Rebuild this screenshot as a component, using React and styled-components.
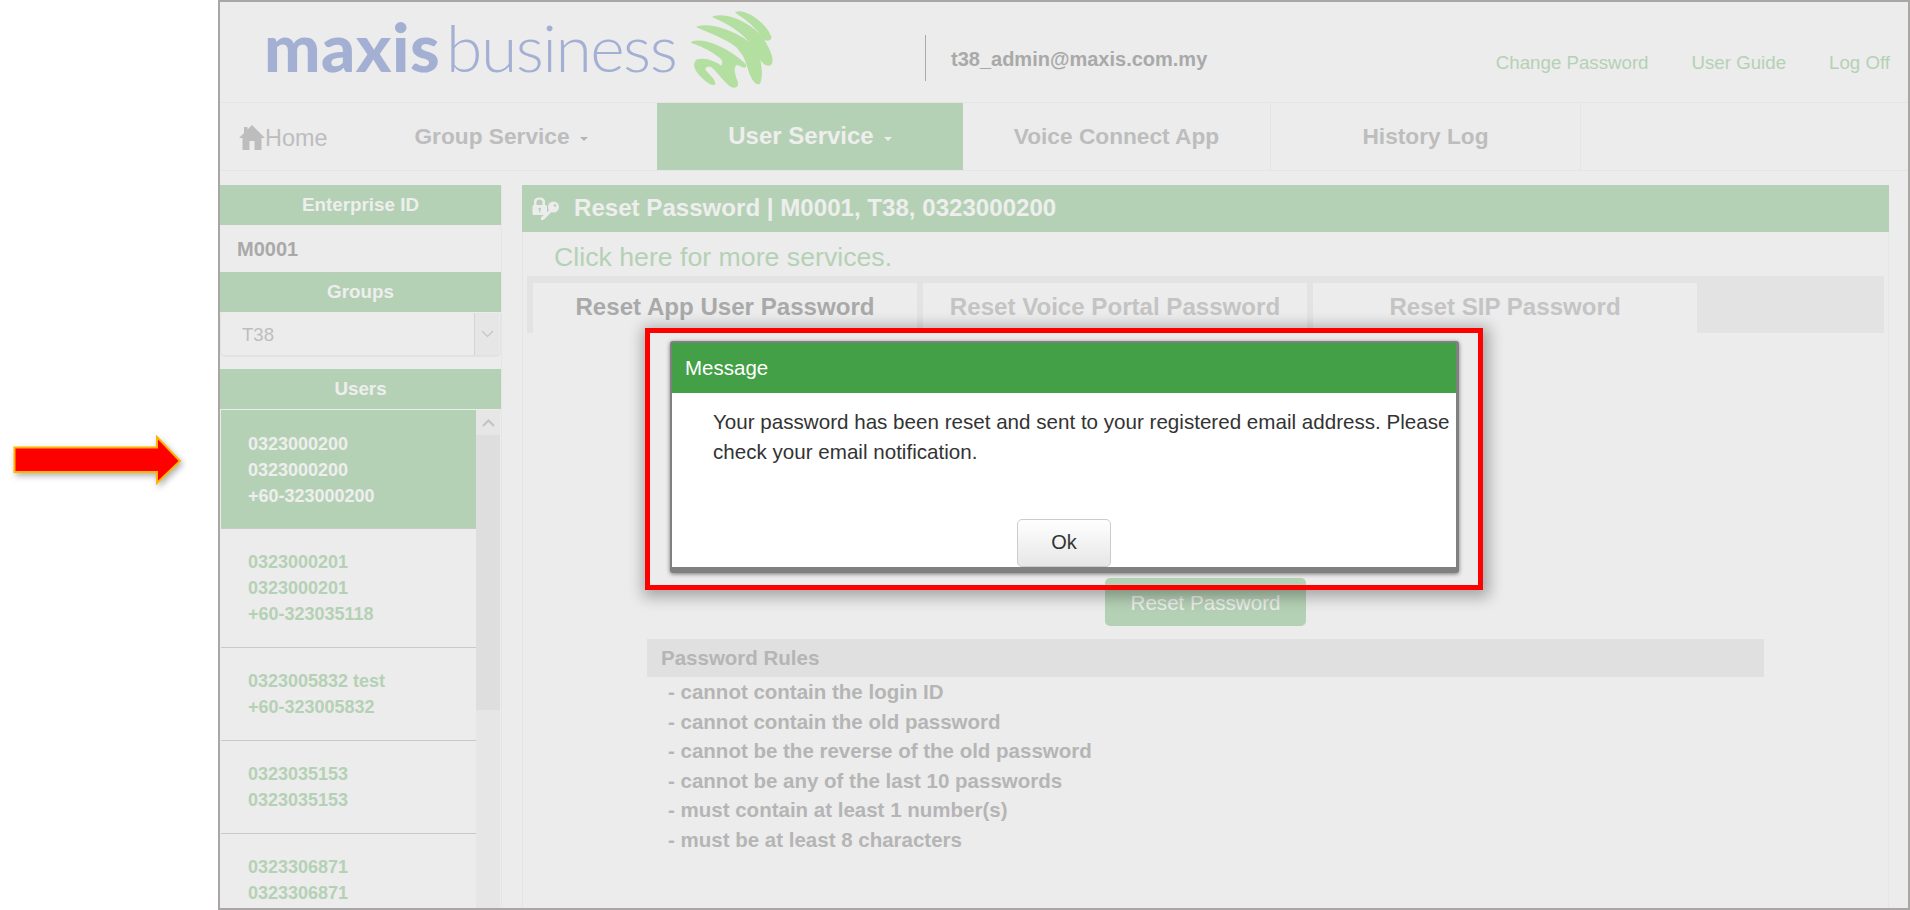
import styled, { createGlobalStyle } from "styled-components";

const GREEN = "#b5d1b5";
const PAPER = "#ececec";
const MUTED = "#b5b5b5";

const users = [
  { lines: ["0323000200", "0323000200", "+60-323000200"], active: true },
  { lines: ["0323000201", "0323000201", "+60-323035118"] },
  { lines: ["0323005832 test", "+60-323005832"] },
  { lines: ["0323035153", "0323035153"] },
  { lines: ["0323306871", "0323306871"] },
];

const rules = [
  "cannot contain the login ID",
  "cannot contain the old password",
  "cannot be the reverse of the old password",
  "cannot be any of the last 10 passwords",
  "must contain at least 1 number(s)",
  "must be at least 8 characters",
];

const tabs = ["Reset App User Password", "Reset Voice Portal Password", "Reset SIP Password"];

function Arrow() {
  return (
    <ArrowSvg width="170" height="52" viewBox="0 0 170 52">
      <path
        d="M1.5 12.5H144V2L167 26L144 48V37H1.5Z"
        fill="#ff0000"
        stroke="#ffb400"
        strokeWidth="2"
      />
    </ArrowSvg>
  );
}

function Swirl() {
  return (
    <SwirlSvg width="100" height="90" viewBox="0 0 300 270">
      <g fill="#b3dfa0" stroke="#b3dfa0" strokeWidth="4" strokeLinejoin="round">
        <path d="M168 22C200 14 255 55 272 95C274 106 262 108 250 100C235 75 205 45 168 22Z" />
        <path d="M100 36C150 22 235 65 262 125C275 150 282 175 268 180C245 180 235 150 222 128C195 85 145 55 100 36Z" />
        <path d="M52 66C100 52 190 90 225 130C245 165 248 215 238 235C225 240 212 215 205 190C195 155 190 150 170 125C140 100 95 85 52 66Z" />
        <path d="M35 112C75 98 150 135 195 178C200 195 185 180 170 178C155 185 165 215 172 232C175 248 160 250 148 240C125 220 110 195 95 185C80 178 68 190 78 200C90 212 105 225 104 236C95 245 75 225 60 210C45 195 38 175 52 165C75 158 105 170 125 185C135 165 125 160 110 150C85 130 60 122 35 112Z" />
      </g>
    </SwirlSvg>
  );
}

function HomeIcon() {
  return (
    <HomeSvg width="26" height="25" viewBox="0 0 26 25">
      <path fill="#bdbdbd" d="M13 0L26 13H22.500V25H15.500V16H10.500V25H3.500V13H0L5 8V2H8.500V4.500Z" />
    </HomeSvg>
  );
}

function LockKeyIcon() {
  return (
    <svg width="28" height="26" viewBox="0 0 28 26">
      <g fill="#ececec">
        <path d="M2 10.500V6.500C2 1 13 1 13 6.500V10.500H10.500V7C10.500 3.500 4.500 3.500 4.500 7V10.500Z" />
        <rect x="0.500" y="10" width="14.500" height="10" rx="1.500" />
        <circle cx="21.500" cy="12" r="5.500" />
        <path d="M18 14.500L20 16.500L12.500 24L11 25H9V22.500Z" />
      </g>
      <circle cx="7.700" cy="14" r="1.300" fill={GREEN} />
      <rect x="7.200" y="14" width="1" height="3.500" fill={GREEN} />
      <circle cx="23" cy="10.500" r="1.300" fill={GREEN} />
    </svg>
  );
}

function Chevron({ up }) {
  return (
    <svg width="13" height="8" viewBox="0 0 13 8">
      <path
        d={up ? "M1 7L6.500 1.500L12 7" : "M1 1L6.500 6.500L12 1"}
        fill="none"
        stroke="#c4c4c4"
        strokeWidth={up ? 2.2 : 1.2}
      />
    </svg>
  );
}

export default function App() {
  return (
    <Page>
      <GlobalStyle />
      <Gutter>
        <Arrow />
      </Gutter>
      <Frame>
        <Header>
          <Logo>
            <LogoBold>maxis</LogoBold>
            <LogoLight>business</LogoLight>
            <Swirl />
          </Logo>
          <Account>t38_admin@maxis.com.my</Account>
          <Links>
            <span>Change Password</span>
            <span>User Guide</span>
            <span>Log Off</span>
          </Links>
        </Header>

        <Nav>
          <HomeLink>
            <HomeIcon />
            <span>Home</span>
          </HomeLink>
          <NavItem $w={312}>
            Group Service<Caret />
          </NavItem>
          <NavItem $w={306} $active>
            User Service<Caret $active />
          </NavItem>
          <NavItem $w={308} $line>Voice Connect App</NavItem>
          <NavItem $w={310} $line>History Log</NavItem>
          <NavRest />
        </Nav>

        <Body>
          <Sidebar>
            <SideTitle>Enterprise ID</SideTitle>
            <EnterpriseId>M0001</EnterpriseId>
            <SideTitle>Groups</SideTitle>
            <GroupSelect>
              <GroupValue>T38</GroupValue>
              <GroupButton>
                <Chevron />
              </GroupButton>
            </GroupSelect>
            <UsersTitle>Users</UsersTitle>
            <UserPane>
              <UserList>
                {users.map((user) => (
                  <UserRow key={user.lines[0]} $active={user.active}>
                    {user.lines.map((line, i) => (
                      <div key={i}>{line}</div>
                    ))}
                  </UserRow>
                ))}
              </UserList>
              <Scrollbar>
                <ScrollUp>
                  <Chevron up />
                </ScrollUp>
                <ScrollThumb />
              </Scrollbar>
            </UserPane>
          </Sidebar>

          <Main>
            <MainTitle>
              <LockKeyIcon />
              <span>Reset Password | M0001, T38, 0323000200</span>
            </MainTitle>
            <Panel>
              <MoreLink>Click here for more services.</MoreLink>
              <TabStrip>
                {tabs.map((tab, i) => (
                  <Tab key={tab} $active={i === 0}>
                    {tab}
                  </Tab>
                ))}
              </TabStrip>
              <ResetButton>Reset Password</ResetButton>
              <RulesTitle>Password Rules</RulesTitle>
              <RuleList>
                {rules.map((rule) => (
                  <li key={rule}>- {rule}</li>
                ))}
              </RuleList>
            </Panel>
          </Main>
        </Body>

        <Highlight>
          <Modal>
            <ModalHead>Message</ModalHead>
            <ModalBody>
              <ModalText>
                Your password has been reset and sent to your registered email address. Please
                check your email notification.
              </ModalText>
              <OkButton>Ok</OkButton>
            </ModalBody>
          </Modal>
        </Highlight>
      </Frame>
    </Page>
  );
}

const GlobalStyle = createGlobalStyle`
  * {
    box-sizing: border-box;
  }
  html, body {
    margin: 0;
    background: #fff;
    font-family: "Liberation Sans", Arial, sans-serif;
  }
`;

const Page = styled.div`
  display: flex;
  width: 1910px;
  height: 910px;
  overflow: hidden;
`;
const Gutter = styled.div`
  width: 218px;
  flex: none;
  padding: 435px 0 0 13px;
`;
const ArrowSvg = styled.svg`
  display: block;
  filter: drop-shadow(2px 3px 3px rgba(0, 0, 0, 0.3));
`;
const Frame = styled.div`
  position: relative;
  flex: 1;
  display: flex;
  flex-direction: column;
  border: 2px solid #aaa6a6;
  background: ${PAPER};
  overflow: hidden;
`;

const Header = styled.div`
  position: relative;
  display: flex;
  height: 101px;
  flex: none;
  border-bottom: 1px solid #e5e5e5;
`;
const Logo = styled.div`
  display: flex;
  align-items: baseline;
  width: 705px;
  padding: 3px 0 0 44px;
  color: #a4b0d3;
  font-family: Lato, sans-serif;
  font-size: 67px;
  line-height: 82px;
`;
const LogoBold = styled.span`
  font-weight: 900;
  letter-spacing: 0.5px;
`;
const LogoLight = styled.span`
  font-weight: 300;
  font-size: 66px;
  margin-left: 6px;
  letter-spacing: -1.5px;
`;
const SwirlSvg = styled.svg`
  align-self: flex-start;
  margin: 0 0 0 4px;
`;
const Account = styled.div`
  align-self: flex-start;
  height: 46px;
  margin-top: 33px;
  padding-left: 25px;
  border-left: 1px solid #aaa;
  font-size: 20px;
  font-weight: 700;
  line-height: 48px;
  color: #a9a9a9;
`;
const Links = styled.div`
  display: flex;
  gap: 43px;
  margin-left: auto;
  padding: 50px 18px 0 0;
  font-size: 18.700px;
  line-height: 22px;
  color: ${GREEN};
`;

const Nav = styled.div`
  display: flex;
  height: 68px;
  flex: none;
  border-bottom: 1px solid #e5e5e5;
`;
const HomeLink = styled.div`
  display: flex;
  align-items: center;
  width: 125px;
  padding: 4px 0 0 19px;
  font-size: 23.400px;
  color: #bdbdbd;
`;
const HomeSvg = styled.svg`
  margin-bottom: 3px;
`;
const NavItem = styled.div`
  display: flex;
  align-items: center;
  justify-content: center;
  width: ${(p) => p.$w}px;
  padding-bottom: 1px;
  font-size: ${(p) => (p.$active ? 24 : 22.700)}px;
  font-weight: 700;
  color: ${(p) => (p.$active ? "#eee" : "#bdbdbd")};
  background: ${(p) => (p.$active ? GREEN : "transparent")};
  border-right: ${(p) => (p.$line ? "1px solid #e5e5e5" : "0")};
`;
const NavRest = styled.div`
  flex: 1;
`;
const Caret = styled.i`
  width: 0;
  height: 0;
  margin: 5px 0 0 10px;
  border-top: 4px solid ${(p) => (p.$active ? "#eee" : "#b5b5b5")};
  border-left: 4px solid transparent;
  border-right: 4px solid transparent;
`;

const Body = styled.div`
  display: flex;
  flex: 1;
  min-height: 0;
  padding-top: 14px;
`;
const Sidebar = styled.div`
  display: flex;
  flex-direction: column;
  width: 282px;
  flex: none;
  border-right: 1px solid #e5e5e5;
`;
const SideTitle = styled.div`
  height: 40px;
  flex: none;
  background: ${GREEN};
  text-align: center;
  font-size: 18.800px;
  font-weight: 700;
  line-height: 39px;
  color: #eee;
`;
const EnterpriseId = styled.div`
  height: 47px;
  flex: none;
  padding-left: 17px;
  font-size: 20px;
  font-weight: 700;
  line-height: 48px;
  color: #a9a9a9;
`;
const GroupSelect = styled.div`
  display: flex;
  height: 45px;
  flex: none;
  margin-bottom: 12px;
  padding: 1px 1px 0;
  border: solid #e2e2e2;
  border-width: 0 1px 2px;
  border-radius: 5px;
`;
const GroupValue = styled.div`
  flex: 1;
  padding-left: 20px;
  font-size: 18.600px;
  line-height: 44px;
  color: #bdbdbd;
`;
const GroupButton = styled.div`
  display: flex;
  align-items: center;
  justify-content: center;
  width: 25px;
  background: #e6e6e6;
  border-left: 1px solid #d5d5d5;
`;
const UsersTitle = styled(SideTitle)`
  margin-bottom: 1px;
`;
const UserPane = styled.div`
  display: flex;
  flex: 1;
  min-height: 0;
  padding-left: 1px;
`;
const UserList = styled.div`
  width: 255px;
  flex: none;
`;
const UserRow = styled.div`
  padding: ${(p) => (p.$active ? "21px 0 19px" : "20px 0")};
  padding-left: 27px;
  border-bottom: 1px solid #c9c9c9;
  background: ${(p) => (p.$active ? GREEN : "transparent")};
  font-size: 18px;
  font-weight: 700;
  line-height: 26px;
  color: ${(p) => (p.$active ? "#eee" : GREEN)};
`;
const Scrollbar = styled.div`
  width: 24px;
  flex: none;
  background: #e6e6e6;
`;
const ScrollUp = styled.div`
  display: flex;
  align-items: center;
  justify-content: center;
  height: 25px;
`;
const ScrollThumb = styled.div`
  height: 275px;
  background: #dedede;
`;

const Main = styled.div`
  display: flex;
  flex-direction: column;
  width: 1367px;
  margin-left: 20px;
  flex: none;
`;
const MainTitle = styled.div`
  display: flex;
  align-items: center;
  gap: 14px;
  height: 47px;
  flex: none;
  padding: 0 0 1px 10px;
  background: ${GREEN};
  font-size: 24.100px;
  font-weight: 700;
  color: #eee;
`;
const Panel = styled.div`
  flex: 1;
  display: flex;
  flex-direction: column;
  padding: 0 4px;
  border-left: 1px solid #e5e5e5;
  border-right: 1px solid #e5e5e5;
`;
const MoreLink = styled.div`
  height: 44px;
  padding: 9px 0 0 27px;
  font-size: 26.700px;
  line-height: 32px;
  color: ${GREEN};
`;
const TabStrip = styled.div`
  display: flex;
  gap: 6px;
  height: 57px;
  flex: none;
  padding: 7px 0 0 6px;
  background: #e3e3e3;
`;
const Tab = styled.div`
  width: 384px;
  text-align: center;
  background: ${PAPER};
  font-size: 24.100px;
  font-weight: 700;
  line-height: 48px;
  color: ${(p) => (p.$active ? "#a9a9a9" : "#c4c4c4")};
`;
const ResetButton = styled.div`
  align-self: center;
  width: 201px;
  height: 48px;
  margin: 245px 0 13px;
  border-radius: 5px;
  background: ${GREEN};
  text-align: center;
  font-size: 20.600px;
  line-height: 49px;
  color: #eee;
`;
const RulesTitle = styled.div`
  height: 38px;
  flex: none;
  margin: 0 120px;
  padding-left: 14px;
  background: #e0e0e0;
  font-size: 20.500px;
  font-weight: 700;
  line-height: 38px;
  color: ${MUTED};
`;
const RuleList = styled.ul`
  margin: 0;
  padding: 0 0 0 141px;
  list-style: none;
  font-size: 20.500px;
  font-weight: 700;
  line-height: 29.500px;
  color: ${MUTED};
`;

const Highlight = styled.div`
  position: absolute;
  left: 425px;
  top: 326px;
  width: 838px;
  height: 262px;
  padding: 8px 19px 0 20px;
  border: 5px solid #ff0000;
  box-shadow: 2px 3px 14px 4px rgba(0, 0, 0, 0.3);
`;
const Modal = styled.div`
  display: flex;
  flex-direction: column;
  height: 232px;
  border: solid #808080;
  border-width: 2px 3px 6px 2px;
  border-radius: 3px;
  background: #fff;
  box-shadow: 0 1px 4px rgba(0, 0, 0, 0.5);
`;
const ModalHead = styled.div`
  height: 50px;
  flex: none;
  padding-left: 13px;
  background: #43a047;
  font-size: 20.500px;
  line-height: 50px;
  color: #fff;
`;
const ModalBody = styled.div`
  flex: 1;
  display: flex;
  flex-direction: column;
  padding: 14px 0 0 41px;
`;
const ModalText = styled.p`
  margin: 0;
  font-size: 20.600px;
  line-height: 29.500px;
  color: #333;
`;
const OkButton = styled.div`
  align-self: center;
  width: 94px;
  height: 48px;
  margin: auto 0 0 -41px;
  border: 1px solid #ccc;
  border-radius: 5px;
  background: linear-gradient(#fff, #e6e6e6);
  text-align: center;
  font-size: 20px;
  line-height: 44px;
  color: #333;
`;
